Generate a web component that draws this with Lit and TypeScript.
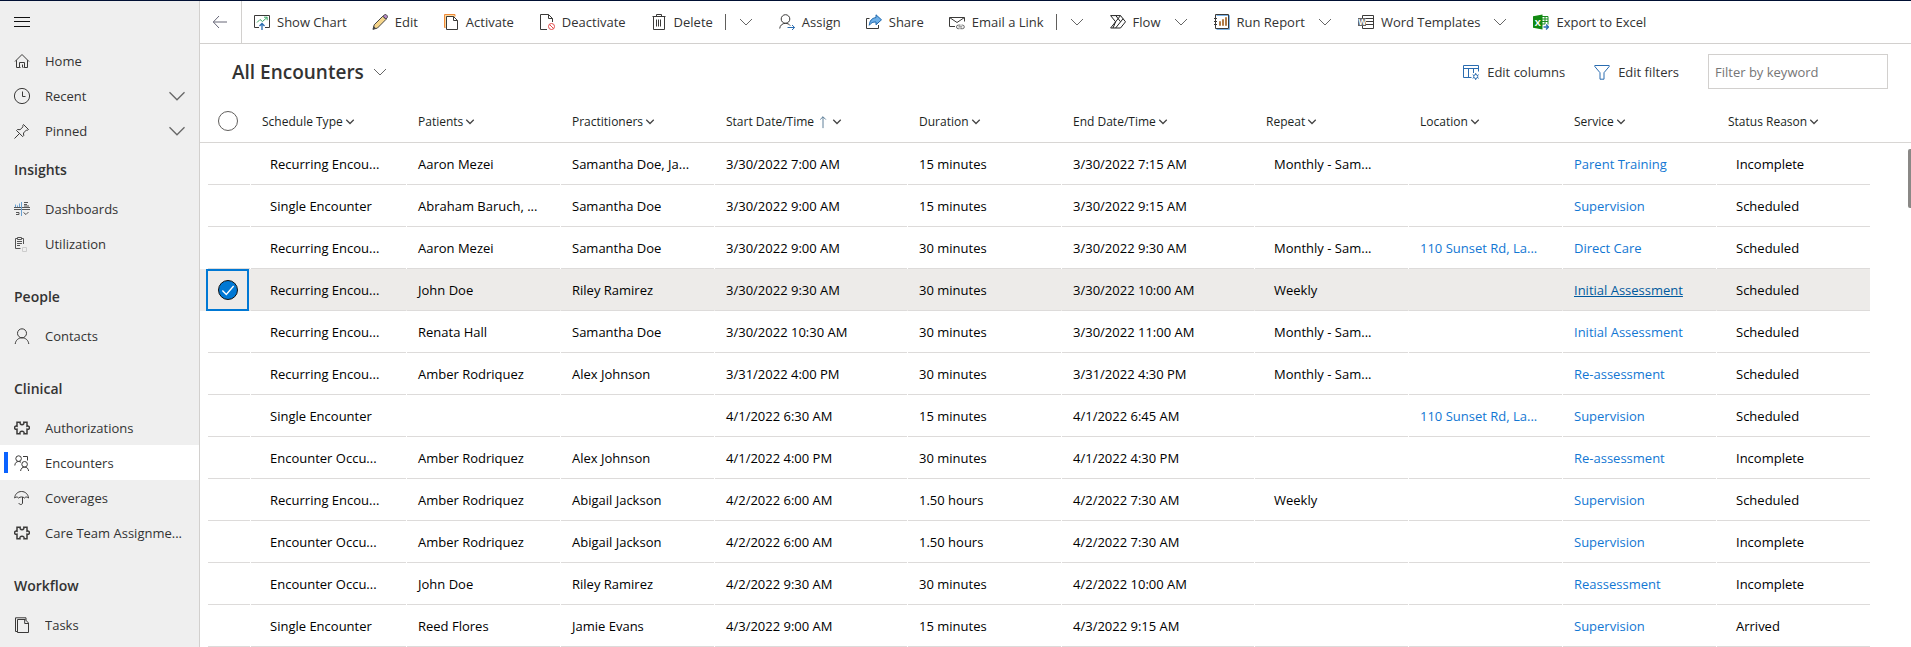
import { LitElement, html, svg, css, nothing, type TemplateResult } from "lit";
import { customElement, property, state } from "lit/decorators.js";
import { classMap } from "lit/directives/class-map.js";

const ICONS: Record<string, TemplateResult> = {
  menu: svg`<path d="M0 3.5h16M0 7.5h16M0 12.5h16" stroke="#111"/>`,
  home: svg`<path d="M1 8.5 8 1.5l7 7M2.5 7.2v7.3h3v-5h5v5h3V7.2M8.5 14.5v-3M5.5 14.5h1M9.5 14.5h1"/>`,
  clock: svg`<circle cx="8" cy="8" r="7.6"/><path d="M8.500 3.500v5h3"/>`,
  pin: svg`<path d="M9.500 1.500 14.500 6.500l-1.300.8-.9-.2-2.800 2.900.2 2.600-1 1L2.500 7.500l1-1 2.600.2 2.900-2.900-.2-1.200zM5.500 10.500l-5 5"/>`,
  dashboards: svg`<path d="M1.500 6V3.500M3.500 6V4.500M5.500 6V2.500" stroke="#6aa0d0"/><path d="M0 6.500h16M0 8.500h16" stroke="#555"/><path d="M7.500 1v14" stroke="#6aa0d0"/><path d="M10 1.500h4M10 3.500h3M10 5h5M2 11.500h3v2H2M9.500 11.500l2.500 2 2.500-2.500" stroke="#555"/>`,
  clipboard: svg`<path d="M3.500 2.500h-2v10h5M9.500 8V2.500h-2M3.500 1.500h4v2h-4zM3 5.500h5M3 7.500h5M3 9.500h3" stroke="#555"/><path d="M8.500 11.500h4v4h-4z" stroke="#ccc"/>`,
  person: svg`<circle cx="8" cy="5.300" r="4.500"/><path d="M1.200 16c.5-3.800 3.200-6.200 6.800-6.200s6.300 2.400 6.800 6.200"/>`,
  puzzle: svg`<path d="M3 2.200h3.200c-.3 1.600.3 2.500 1.800 2.500s2.100-.9 1.800-2.500H13v4c1.600-.4 2.400.2 2.400 1.500S14.600 9.600 13 9.200v4.600h-3c.4-1.700-.4-2.600-2-2.600s-2.400.9-2 2.600H3V9.200C1.400 9.600.6 9 .6 7.700S1.400 5.800 3 6.200z" stroke-width="1.500"/>`,
  people: svg`<circle cx="4.600" cy="3.600" r="2.800"/><path d="M.8 10.500c.2-2.600 1.600-4 3.800-4 1 0 1.800.3 2.400.8M9 1.500h4.500v4"/><circle cx="10.600" cy="9.300" r="2.800"/><path d="M6.600 16c.3-2.500 1.700-3.900 4-3.900s3.700 1.400 4 3.900"/>`,
  umbrella: svg`<path d="M.7 8C.9 4.200 3.700 1.500 7.500 1.500S14.200 4.200 14.500 8c-1.500-1.300-3-1.300-4 0-1.500-1.400-4.300-1.400-6 0-1-1.300-2.400-1.300-3.800 0zM8.500 7v6c0 2-3.500 2-3.500 0"/>`,
  tasks: svg`<path d="M3 14.500H1.500V.8H12V3"/><path d="M3.500 2.500h7.700l3.300 3.500v9.500h-11zM10.700 2.700v3.800h3.600"/>`,
  back: svg`<path d="M15 8H1.500M7 2 1.300 8 7 14" stroke="#667"/>`,
  chart: svg`<path d="M5 13.500H.5V1.500h15v12H11"/><path d="M3 8.500l3-3 2.500 2L13 3.500M10 3.200h3.200v3" stroke="#3aa564"/><path d="M8 16V9.500M5.500 12 8 9.500l2.500 2.500" stroke="#2a6cb0" stroke-width="1.300"/>`,
  edit: svg`<path d="M1 15.300l1.200-4.500 8.600-8.600 3.200 3.200-8.600 8.700z" fill="#f6d58a" stroke="#444"/><path d="M11 2.200l1.300-1.300c1-.8 2-.3 2.600.5.7.8.8 1.600.2 2.400L13.900 5.100z" fill="#b88bc9" stroke="#444"/><path d="M.7 15.500l1-3.400 2.300 2.300z" fill="#444" stroke="none"/>`,
  activate: svg`<path d="M2.500 13.500h-1v-13H12v2" fill="#fbd9a0" stroke="#f08a38"/><path d="M3.500 2.500h7l4 4v9h-11z" fill="#fff"/><path d="M10.500 2.500v4h4"/>`,
  deactivate: svg`<path d="M8 15.500H1.500V.5h8l4 4V8M9.500.5v4h4"/><circle cx="12.500" cy="12.500" r="3" stroke="#e34a4a"/><path d="M10.400 10.400l4.200 4.200" stroke="#e34a4a"/>`,
  trash: svg`<path d="M1.500 2.500h13M5.500 2.500v-2h5v2M2.500 3v12.500h11V3M5.500 5.500v7M7.500 5.500v7M9.500 5.500v7"/>`,
  assign: svg`<circle cx="6.500" cy="5" r="4.300"/><path d="M.7 14.500c.3-3 2.600-5.200 5.800-5.200 2 0 3.700.9 4.700 2.300"/><path d="M8.500 13.500h7M13 11l2.600 2.500L13 16" stroke="#2a6cb0"/>`,
  share: svg`<path d="M3.500 4.500h-3v10h12V11"/><path d="M10 .8l5.500 5-5.500 5V8C7 7.800 5 8.800 3.300 11.300 3.500 7 5.800 4 10 3.600z" fill="#6fb0e8" stroke="#1f68ad"/>`,
  mail: svg`<path d="M6 12.500H.5v-9h15v4M.8 3.700 8 8.500l7.200-4.800"/><path d="M10.500 14.700H9.300a1.800 1.800 0 0 1 0-3.600h2.200M12.500 11.100h1a1.800 1.800 0 0 1 0 3.600h-2.200M9.500 12.900h3.700" stroke="#666"/>`,
  flow: svg`<path d="M.6 1.600h9.900l5 6.200-5 6.200H.6l5-6.200zM5.800 1.600l4.800 6.200-5 6.200M5.600 7.800l4.900-6.200M10.700 7.800 13 4.700M3 14l2.600-6.200" stroke="#222"/>`,
  report: svg`<path d="M2.500 1.500h13v14h-13" stroke="#7db4e6"/><path d="M1.500.5h13v14h-13zM0 4.500h3M0 7.500h3M0 10.500h3"/><path d="M5.500 11.500v-4h1v4zM8.500 11.500v-6h1v6zM11.500 11.500v-8h1v8z" stroke="#b07a45"/>`,
  word: svg`<path d="M4.500 4V1.500h11v13h-11V12M8 4.500h7.500M8 7.500h7.500M8 10.500h7.500"/><path d="M0 4h8v8H0z" fill="#666" stroke="none"/><text x="0.600" y="11" font-size="8" font-weight="700" fill="#fff" stroke="none">W</text>`,
  excel: svg`<path d="M9 2.500h6v8M9 5h6M9 7.500h6M9 10h3M12 2v8" stroke="#178a1c"/><path d="M0 2.200 9.500.4v15.200L0 13.800z" fill="#128a12" stroke="none"/><text x="1.800" y="11.500" font-size="9" font-weight="700" fill="#fff" stroke="none">X</text><path d="M10.500 13h4.700M13 10.500l2.500 2.500-2.500 2.500" stroke="#2a6cb0" stroke-width="1.300"/>`,
  columns: svg`<path d="M8.500 13.500h-8v-12h15v6M.5 4.500h15M5.500 4.500v9M10.500 4.500V9" stroke="#2a6cb0"/><circle cx="12.700" cy="12.500" r="2" stroke="#2a6cb0"/><path d="M12.700 9v1.500M12.700 14.500V16M9.700 10.700l1.200.8M14.500 13.500l1.200.8M9.700 14.300l1.200-.8M14.500 11.500l1.200-.8" stroke="#2a6cb0"/>`,
  filter: svg`<path d="M.8 1.500h14.400v1L10 8.700v6.500H6V8.700L.8 2.500z" stroke="#2a6cb0"/>`,
  chevron: svg`<path d="M2 5l6 6 6-6" stroke="#666"/>`,
  chevronBold: svg`<path d="M2 4.500l6 6 6-6" stroke="#444" stroke-width="2"/>`,
  check: svg`<path d="M3 8.500 6.500 12 13 4.500" stroke="#fff" stroke-width="1.200"/>`,
  up: svg`<path d="M8 15V2M4.800 5.200 8 2l3.200 3.200" stroke="#4a6f8c"/>`,
};

@customElement("ui-icon")
class UiIcon extends LitElement {
  static styles = css`
    :host {
      display: inline-flex;
      flex: none;
      width: 16px;
      height: 16px;
    }
    svg {
      width: 100%;
      height: 100%;
      fill: none;
      stroke: #3b3a39;
      font-family: "Open Sans", sans-serif;
    }
  `;
  @property() name = "";
  render() {
    return html`<svg viewBox="0 0 16 16" aria-hidden="true">${ICONS[this.name]}</svg>`;
  }
}

interface NavItem {
  label: string;
  icon: string;
  expandable?: boolean;
}

const NAV: { title?: string; items: NavItem[] }[] = [
  {
    items: [
      { label: "Home", icon: "home" },
      { label: "Recent", icon: "clock", expandable: true },
      { label: "Pinned", icon: "pin", expandable: true },
    ],
  },
  {
    title: "Insights",
    items: [
      { label: "Dashboards", icon: "dashboards" },
      { label: "Utilization", icon: "clipboard" },
    ],
  },
  { title: "People", items: [{ label: "Contacts", icon: "person" }] },
  {
    title: "Clinical",
    items: [
      { label: "Authorizations", icon: "puzzle" },
      { label: "Encounters", icon: "people" },
      { label: "Coverages", icon: "umbrella" },
      { label: "Care Team Assignme...", icon: "puzzle" },
    ],
  },
  { title: "Workflow", items: [{ label: "Tasks", icon: "tasks" }] },
];

@customElement("side-nav")
class SideNav extends LitElement {
  static styles = css`
    :host {
      display: block;
      box-sizing: border-box;
      background: #efefef;
      border-right: 1px solid #d2d0ce;
      overflow: hidden;
    }
    .menu {
      display: flex;
      align-items: center;
      height: 42px;
      padding: 0 14px;
      border: 0;
      background: none;
    }
    h2 {
      margin: 14px 0 0;
      padding-left: 14px;
      font-size: 14px;
      font-weight: 600;
      line-height: 43px;
      color: #333;
    }
    .first {
      margin-top: 0;
    }
    ul {
      margin: 0;
      padding: 0;
      list-style: none;
    }
    a {
      position: relative;
      display: flex;
      align-items: center;
      gap: 15px;
      height: 35px;
      padding: 0 12px 0 14px;
      color: #333;
      text-decoration: none;
    }
    .label {
      flex: 1;
      overflow: hidden;
      white-space: nowrap;
      text-overflow: ellipsis;
    }
    .expand {
      width: 20px;
      height: 20px;
    }
    .current {
      background: #fff;
    }
    .current::before {
      content: "";
      position: absolute;
      left: 4px;
      top: 7px;
      bottom: 7px;
      width: 4px;
      background: #0b63ff;
    }
  `;
  render() {
    return html`<button class="menu" aria-label="Site map"><ui-icon name="menu"></ui-icon></button>
      <nav>
        ${NAV.map(
          (g, i) => html`${g.title ? html`<h2 class=${classMap({ first: i === 1 })}>${g.title}</h2>` : nothing}
            <ul>
              ${g.items.map(
                (n) => html`<li>
                  <a href="#" class=${classMap({ current: n.label === "Encounters" })}>
                    <ui-icon name=${n.icon}></ui-icon><span class="label">${n.label}</span>
                    ${n.expandable ? html`<ui-icon class="expand" name="chevron"></ui-icon>` : nothing}
                  </a>
                </li>`
              )}
            </ul>`
        )}
      </nav>`;
  }
}

interface Command {
  label: string;
  icon: string;
  split?: boolean;
  menu?: boolean;
}

const COMMANDS: Command[] = [
  { label: "Show Chart", icon: "chart" },
  { label: "Edit", icon: "edit" },
  { label: "Activate", icon: "activate" },
  { label: "Deactivate", icon: "deactivate" },
  { label: "Delete", icon: "trash", split: true, menu: true },
  { label: "Assign", icon: "assign" },
  { label: "Share", icon: "share" },
  { label: "Email a Link", icon: "mail", split: true, menu: true },
  { label: "Flow", icon: "flow", menu: true },
  { label: "Run Report", icon: "report", menu: true },
  { label: "Word Templates", icon: "word", menu: true },
  { label: "Export to Excel", icon: "excel" },
];

@customElement("command-bar")
class CommandBar extends LitElement {
  static styles = css`
    :host {
      display: flex;
      height: 42px;
      border-bottom: 1px solid #d2d0ce;
    }
    button {
      display: flex;
      align-items: center;
      border: 0;
      padding: 0;
      background: none;
      font: inherit;
      color: #333;
      white-space: nowrap;
    }
    .back {
      padding: 0 13px 0 12px;
      border-right: 1px solid #d2d0ce;
    }
    .list {
      display: flex;
      gap: 25px;
      padding-left: 12px;
    }
    .item {
      display: flex;
      align-items: center;
    }
    .command {
      gap: 7px;
      height: 100%;
    }
    .rule {
      width: 1px;
      height: 16px;
      margin-left: 12px;
      background: #605e5c;
    }
    .more {
      padding-left: 12px;
    }
  `;
  render() {
    return html`<button class="back" aria-label="Back"><ui-icon name="back"></ui-icon></button>
      <div class="list">
        ${COMMANDS.map(
          (c) => html`<div class="item">
            <button class="command"><ui-icon name=${c.icon}></ui-icon>${c.label}</button>
            ${c.split ? html`<span class="rule"></span>` : nothing}
            ${c.menu
              ? html`<button class="more" aria-label="More ${c.label} options">
                  <ui-icon name="chevron"></ui-icon>
                </button>`
              : nothing}
          </div>`
        )}
      </div>`;
  }
}

const COLUMNS = [
  { label: "Schedule Type", choice: true, kind: "first" },
  { label: "Patients" },
  { label: "Practitioners" },
  { label: "Start Date/Time", kind: "date", sorted: true },
  { label: "Duration" },
  { label: "End Date/Time", kind: "date" },
  { label: "Repeat", choice: true },
  { label: "Location", link: true },
  { label: "Service", link: true },
  { label: "Status Reason", choice: true },
] as { label: string; choice?: boolean; link?: boolean; sorted?: boolean; kind?: string }[];

const REC = "Recurring Encou...";
const ONE = "Single Encounter";
const OCC = "Encounter Occu...";
const SAM = "Monthly - Sam...";
const RD = "110 Sunset Rd, La...";

const ROWS: string[][] = [
  [REC, "Aaron Mezei", "Samantha Doe, Ja...", "3/30/2022 7:00 AM", "15 minutes", "3/30/2022 7:15 AM", SAM, "", "Parent Training", "Incomplete"],
  [ONE, "Abraham Baruch, ...", "Samantha Doe", "3/30/2022 9:00 AM", "15 minutes", "3/30/2022 9:15 AM", "", "", "Supervision", "Scheduled"],
  [REC, "Aaron Mezei", "Samantha Doe", "3/30/2022 9:00 AM", "30 minutes", "3/30/2022 9:30 AM", SAM, RD, "Direct Care", "Scheduled"],
  [REC, "John Doe", "Riley Ramirez", "3/30/2022 9:30 AM", "30 minutes", "3/30/2022 10:00 AM", "Weekly", "", "Initial Assessment", "Scheduled"],
  [REC, "Renata Hall", "Samantha Doe", "3/30/2022 10:30 AM", "30 minutes", "3/30/2022 11:00 AM", SAM, "", "Initial Assessment", "Scheduled"],
  [REC, "Amber Rodriquez", "Alex Johnson", "3/31/2022 4:00 PM", "30 minutes", "3/31/2022 4:30 PM", SAM, "", "Re-assessment", "Scheduled"],
  [ONE, "", "", "4/1/2022 6:30 AM", "15 minutes", "4/1/2022 6:45 AM", "", RD, "Supervision", "Scheduled"],
  [OCC, "Amber Rodriquez", "Alex Johnson", "4/1/2022 4:00 PM", "30 minutes", "4/1/2022 4:30 PM", "", "", "Re-assessment", "Incomplete"],
  [REC, "Amber Rodriquez", "Abigail Jackson", "4/2/2022 6:00 AM", "1.50 hours", "4/2/2022 7:30 AM", "Weekly", "", "Supervision", "Scheduled"],
  [OCC, "Amber Rodriquez", "Abigail Jackson", "4/2/2022 6:00 AM", "1.50 hours", "4/2/2022 7:30 AM", "", "", "Supervision", "Incomplete"],
  [OCC, "John Doe", "Riley Ramirez", "4/2/2022 9:30 AM", "30 minutes", "4/2/2022 10:00 AM", "", "", "Reassessment", "Incomplete"],
  [ONE, "Reed Flores", "Jamie Evans", "4/3/2022 9:00 AM", "15 minutes", "4/3/2022 9:15 AM", "", "", "Supervision", "Arrived"],
];

@customElement("encounter-grid")
class EncounterGrid extends LitElement {
  static styles = css`
    :host {
      display: block;
      position: relative;
      overflow: hidden;
    }
    table {
      width: 100%;
      table-layout: fixed;
      border-collapse: separate;
      border-spacing: 0;
    }
    .c-check { width: 50px; }
    .c-first { width: 156px; }
    .c-text { width: 154px; }
    .c-date { width: 193px; }
    .c-end { width: 41px; }
    th,
    td {
      box-sizing: border-box;
      padding: 0 12px;
      text-align: left;
      overflow: hidden;
      white-space: nowrap;
      text-overflow: ellipsis;
    }
    th {
      height: 44px;
      border-bottom: 1px solid #d8d6d4;
      font-size: 12px;
      font-weight: 400;
    }
    td {
      height: 42px;
      color: #000;
      background: linear-gradient(#dddbda, #dddbda) right bottom / calc(100% - 1px) 1px no-repeat;
    }
    td.choice {
      padding-left: 20px;
    }
    .end {
      background: none;
      padding: 0;
    }
    .sort {
      display: flex;
      align-items: center;
      gap: 2px;
      padding: 2px 0 0;
      border: 0;
      background: none;
      font: inherit;
      font-weight: 500;
      color: #201f1e;
    }
    .small {
      width: 10px;
      height: 10px;
    }
    .arrow {
      width: 14px;
      height: 14px;
    }
    .check {
      padding: 0 0 0 6px;
      background-size: 42px 1px;
    }
    .pick {
      position: relative;
      display: flex;
      align-items: center;
      justify-content: center;
      box-sizing: border-box;
      width: 43px;
      height: 42px;
    }
    input {
      appearance: none;
      box-sizing: border-box;
      width: 20px;
      height: 20px;
      margin: 0;
      border: 1px solid #605e5c;
      border-radius: 50%;
      background: #fff;
    }
    td input:not(:checked) {
      opacity: 0;
    }
    .tick {
      position: absolute;
      width: 18px;
      height: 18px;
    }
    .selected td:not(.end) {
      background-color: #edebe9;
    }
    .selected .pick {
      border: 2px solid #0078d4;
    }
    .selected input {
      background: #0078d4;
      border-color: #111;
    }
    a {
      color: #1277d3;
      text-decoration: none;
    }
    .selected a {
      color: #005a9e;
      text-decoration: underline;
    }
    .thumb {
      position: absolute;
      right: 0;
      top: 50px;
      width: 3px;
      height: 59px;
      border-radius: 2px 0 0 2px;
      background: #8a8886;
    }
  `;

  @state() private selected = 3;

  private cell(text: string, i: number) {
    const col = COLUMNS[i];
    return html`<td class=${classMap({ choice: !!col.choice })}>${col.link && text ? html`<a href="#">${text}</a>` : text}</td>`;
  }

  render() {
    return html`<table>
        <colgroup>
          <col class="c-check" />
          ${COLUMNS.map((c) => html`<col class="c-${c.kind ?? "text"}" />`)}
          <col class="c-end" />
        </colgroup>
        <thead>
          <tr>
            <th class="check">
              <label class="pick"><input type="checkbox" aria-label="Select all rows" /></label>
            </th>
            ${COLUMNS.map(
              (c) => html`<th scope="col">
                <button class="sort">
                  ${c.label}${c.sorted ? html`<ui-icon class="arrow" name="up"></ui-icon>` : nothing}
                  <ui-icon class="small" name="chevronBold"></ui-icon>
                </button>
              </th>`
            )}
            <th></th>
          </tr>
        </thead>
        <tbody>
          ${ROWS.map(
            (r, i) => html`<tr class=${classMap({ selected: i === this.selected })}>
              <td class="check">
                <label class="pick">
                  <input
                    type="checkbox"
                    aria-label="Select row"
                    .checked=${i === this.selected}
                    @change=${() => (this.selected = i === this.selected ? -1 : i)}
                  />
                  ${i === this.selected ? html`<ui-icon class="tick" name="check"></ui-icon>` : nothing}
                </label>
              </td>
              ${r.map((t, c) => this.cell(t, c))}
              <td class="end"></td>
            </tr>`
          )}
        </tbody>
      </table>
      <div class="thumb"></div>`;
  }
}

@customElement("app-root")
class AppRoot extends LitElement {
  static styles = css`
    :host {
      display: grid;
      grid-template-columns: 200px minmax(0, 1fr);
      box-sizing: border-box;
      height: 100vh;
      overflow: hidden;
      border-top: 1px solid #000f33;
      background: #fff;
      color: #333;
      font-family: "Segoe UI", "Open Sans", sans-serif;
      font-size: 13px;
      line-height: 20px;
    }
    main {
      overflow: hidden;
    }
    .head {
      display: flex;
      align-items: center;
      gap: 29px;
      height: 55px;
      padding: 0 23px 0 32px;
    }
    button {
      display: flex;
      align-items: center;
      gap: 8px;
      padding: 0;
      border: 0;
      background: none;
      font: inherit;
      color: #333;
    }
    h1 {
      margin: 0 auto 0 0;
      font-size: 19px;
      font-weight: 600;
      line-height: 26px;
      color: #323130;
    }
    input {
      box-sizing: border-box;
      width: 180px;
      height: 35px;
      padding: 0 6px;
      border: 1px solid #d2d0ce;
      font: inherit;
      color: #333;
    }
    input::placeholder {
      color: #767676;
    }
  `;
  render() {
    return html`<side-nav></side-nav>
      <main>
        <command-bar></command-bar>
        <div class="head">
          <h1><button>All Encounters<ui-icon name="chevron"></ui-icon></button></h1>
          <button><ui-icon name="columns"></ui-icon>Edit columns</button>
          <button><ui-icon name="filter"></ui-icon>Edit filters</button>
          <input type="search" aria-label="Filter by keyword" placeholder="Filter by keyword" />
        </div>
        <encounter-grid></encounter-grid>
      </main>`;
  }
}
